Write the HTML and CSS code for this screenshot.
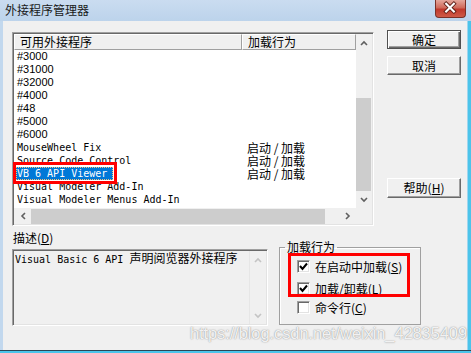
FILE: index.html
```html
<!DOCTYPE html>
<html lang="zh-CN">
<head>
    <meta charset="UTF-8">
    <title>外接程序管理器</title>
    <link rel="stylesheet" href="styles.css">
</head>
<body>

    <div class="window">
        <div class="titlebar">
            <span class="title">外接程序管理器</span>
            <div class="close">
                <svg width="31" height="18" viewBox="0 0 31 18">
                    <path d="M11.5 4.5 L19.5 12.5 M19.5 4.5 L11.5 12.5" stroke="#5a1c14" stroke-width="4" stroke-linecap="square"/>
                    <path d="M11.5 4.5 L19.5 12.5 M19.5 4.5 L11.5 12.5" stroke="#ffffff" stroke-width="2.2" stroke-linecap="square"/>
                </svg>
            </div>
        </div>

        <div class="frame">
            <div class="frame--left"></div>
            <div class="client">
                <div class="top">
                    <div class="listbox">
                        <div class="list--main">
                            <div class="list--header">
                                <div class="hcell hcell-1">可用外接程序</div>
                                <div class="hcell hcell-2">加载行为</div>
                            </div>
                            <div class="row num"><span class="c1">#3000</span></div>
                            <div class="row num"><span class="c1">#31000</span></div>
                            <div class="row num"><span class="c1">#32000</span></div>
                            <div class="row num"><span class="c1">#4000</span></div>
                            <div class="row num"><span class="c1">#48</span></div>
                            <div class="row num"><span class="c1">#5000</span></div>
                            <div class="row num"><span class="c1">#6000</span></div>
                            <div class="row"><span class="c1">MouseWheel Fix</span><span class="c2">启动 / 加载</span></div>
                            <div class="row"><span class="c1">Source Code Control</span><span class="c2">启动 / 加载</span></div>
                            <div class="row is-selected"><span class="c1"><span class="sel">VB 6 API Viewer</span></span><span class="c2">启动 / 加载</span></div>
                            <div class="row"><span class="c1">Visual Modeler Add-In</span></div>
                            <div class="row"><span class="c1">Visual Modeler Menus Add-In</span></div>
                            <div class="redbox redbox-list"></div>
                        </div>
                        <div class="vscroll">
                            <div class="sbtn">
                                <svg width="8" height="6" viewBox="0 0 8 6"><polyline points="1,5 4,2 7,5" fill="none" stroke="#606060" stroke-width="1.6"/></svg>
                            </div>
                            <div class="vtrack-top"></div>
                            <div class="vthumb"></div>
                            <div class="sbtn">
                                <svg width="8" height="6" viewBox="0 0 8 6"><polyline points="1,1 4,4 7,1" fill="none" stroke="#606060" stroke-width="1.6"/></svg>
                            </div>
                        </div>
                        <div class="hscroll">
                            <div class="sbtn">
                                <svg width="6" height="8" viewBox="0 0 6 8"><polyline points="5,1 2,4 5,7" fill="none" stroke="#606060" stroke-width="1.6"/></svg>
                            </div>
                            <div class="hthumb"></div>
                            <div class="htrack"></div>
                            <div class="sbtn">
                                <svg width="6" height="8" viewBox="0 0 6 8"><polyline points="1,1 4,4 1,7" fill="none" stroke="#606060" stroke-width="1.6"/></svg>
                            </div>
                        </div>
                        <div class="corner"></div>
                    </div>

                    <div class="buttons">
                        <button class="btn btn-default">确定</button>
                        <button class="btn btn-cancel">取消</button>
                        <button class="btn btn-help">帮助(<u>H</u>)</button>
                    </div>
                </div>

                <div class="bottom">
                    <div class="desc">
                        <div class="desc--label">描述(<u>D</u>)</div>
                        <div class="desc--box">
                            <div class="desc--text"><span class="mono">Visual Basic 6 API </span>声明阅览器外接程序</div>
                            <div class="dscroll">
                                <div class="sbtn">
                                    <svg width="8" height="6" viewBox="0 0 8 6"><polyline points="1,5 4,2 7,5" fill="none" stroke="#c4c4c4" stroke-width="1.6"/></svg>
                                </div>
                                <div class="sbtn">
                                    <svg width="8" height="6" viewBox="0 0 8 6"><polyline points="1,1 4,4 7,1" fill="none" stroke="#c4c4c4" stroke-width="1.6"/></svg>
                                </div>
                            </div>
                        </div>
                    </div>

                    <fieldset class="group">
                        <legend>加载行为</legend>
                        <div class="check check-1">
                            <span class="box">
                                <svg width="11" height="11" viewBox="0 0 11 11"><polyline points="2,5 4.5,8 9,2.5" fill="none" stroke="#000" stroke-width="2"/></svg>
                            </span>
                            <span>在启动中加载(<u>S</u>)</span>
                        </div>
                        <div class="check check-2">
                            <span class="box">
                                <svg width="11" height="11" viewBox="0 0 11 11"><polyline points="2,5 4.5,8 9,2.5" fill="none" stroke="#000" stroke-width="2"/></svg>
                            </span>
                            <span>加载/卸载(<u>L</u>)</span>
                        </div>
                        <div class="check check-3">
                            <span class="box"></span>
                            <span>命令行(<u>C</u>)</span>
                        </div>
                    </fieldset>

                    <div class="redbox redbox-group"></div>
                </div>
            </div>
            <div class="frame--right"></div>
        </div>
        <div class="frame--bottom"></div>

        <div class="watermark">https://blog.csdn.net/weixin_42835409</div>
    </div>

</body>
</html>
```

FILE: styles.css
```css
html, body {
    height: 100%;
    overflow: hidden;
}
body {
    margin: 0;
    font-family: "Noto Sans CJK SC", "Liberation Sans", sans-serif;
    font-size: 12px;
    color: #000;
    background-color: #bfd5ec;
}

.window {
    position: relative;
    width: 471px;
    height: 353px;
    display: flex;
    flex-direction: column;
    overflow: hidden;
}

/* title bar */
.titlebar {
    position: relative;
    height: 21px;
    flex: none;
    display: flex;
    align-items: center;
    padding-left: 5px;
    background: linear-gradient(#cadcf0, #bcd3eb);
}
.title {
    line-height: 14px;
    margin-top: -1px;
    color: #1a1a1a;
}
.close {
    position: absolute;
    top: 0;
    right: 5px;
    width: 31px;
    height: 18px;
    box-sizing: border-box;
    border: 1px solid #7a3128;
    border-top: none;
    border-radius: 0 0 4px 4px;
    background: linear-gradient(#e5a79c, #d06a5b 45%, #c0392c 55%, #cf5a48);
    display: flex;
}
.close svg {
    margin: -1px 0 0 -1px;
}

/* frame */
.frame {
    display: flex;
    height: 329px;
    flex: none;
}
.frame--left {
    width: 3px;
    background-color: #c2d8ee;
}
.frame--right {
    width: 4px;
    background: linear-gradient(to right, #9fd6ef 1px, #4cc4ea 1px);
}
.frame--bottom {
    height: 2px;
    border-top: 1px solid #2a4656;
    background-color: #4cc4ea;
}

.client {
    width: 464px;
    box-sizing: border-box;
    padding-left: 9px;
    background-color: #f0f0f0;
}

/* list + buttons */
.top {
    display: flex;
}
.listbox {
    margin-top: 11px;
    width: 362px;
    height: 194px;
    box-sizing: border-box;
    border: 1px solid;
    border-color: #a0a0a0 #ffffff #ffffff #a0a0a0;
    box-shadow: inset 1px 1px #696969, inset -1px -1px #e3e3e3;
    padding: 1px;
    display: grid;
    grid-template-columns: 342px 16px;
    grid-template-rows: 174px 16px;
}
.list--main {
    position: relative;
    background-color: #ffffff;
}
.list--header {
    display: flex;
    height: 16px;
    background-color: #f0f0f0;
}
.hcell {
    box-sizing: border-box;
    height: 16px;
    line-height: 14px;
    border: 1px solid;
    border-color: #ffffff #a0a0a0 #a0a0a0 #ffffff;
    white-space: nowrap;
}
.hcell-1 {
    width: 228px;
    padding-left: 5px;
}
.hcell-2 {
    flex: 1;
    padding-left: 5px;
}

.row {
    display: flex;
    height: 13px;
    line-height: 13px;
    white-space: pre;
}
.row .c1 {
    width: 228px;
    box-sizing: border-box;
    padding-left: 3px;
    font-family: "DejaVu Sans Mono", monospace;
    font-size: 10px;
}
.row.num .c1 {
    font-family: "Liberation Sans", sans-serif;
    font-size: 11px;
}
.row .c2 {
    padding-left: 5px;
    font-size: 12px;
    line-height: 13px;
}
.row.is-selected .c1 {
    padding-left: 2px;
}
.sel {
    display: inline-block;
    height: 13px;
    box-sizing: border-box;
    padding: 0 5px 0 0;
    color: #ffffff;
    background-color: #0078d7;
    border: 1px dotted #f2c27d;
    line-height: 11px;
}

.redbox {
    position: absolute;
    box-sizing: border-box;
    border: 3px solid #ff0000;
}
.redbox-list {
    left: -1px;
    top: 128px;
    width: 104px;
    height: 22px;
}

/* scrollbars */
.sbtn {
    width: 16px;
    height: 17px;
    display: flex;
    align-items: center;
    justify-content: center;
    flex: none;
}
.vscroll {
    display: flex;
    flex-direction: column;
    background-color: #f0f0f0;
}
.vtrack-top {
    height: 47px;
}
.vthumb {
    height: 93px;
    width: 15px;
    background-color: #cdcdcd;
}
.hscroll {
    display: flex;
    background-color: #f0f0f0;
}
.hscroll .sbtn {
    width: 17px;
    height: 16px;
}
.hthumb {
    width: 294px;
    height: 15px;
    margin-top: 1px;
    background-color: #cdcdcd;
}
.htrack {
    width: 14px;
}
.corner {
    background-color: #f0f0f0;
}

.buttons {
    margin-left: 13px;
    display: flex;
    flex-direction: column;
}
.btn {
    width: 74px;
    height: 19px;
    padding: 0;
    box-sizing: border-box;
    font-family: inherit;
    font-size: 12px;
    line-height: 14px;
    color: #000;
    background-color: #f0f0f0;
    border: 1px solid;
    border-color: #ffffff #696969 #696969 #ffffff;
    box-shadow: inset -1px -1px #a0a0a0;
}
.btn-default {
    margin-top: 9px;
    border-color: #505050;
    box-shadow: inset 1px 1px #ffffff, inset -1px -1px #696969, inset -2px -2px #a0a0a0;
}
.btn-cancel {
    margin-top: 7px;
}
.btn-help {
    margin-top: 103px;
    height: 20px;
}

/* description + group */
.bottom {
    position: relative;
    display: flex;
    align-items: flex-start;
}
.desc {
    width: 256px;
}
.desc--label {
    margin-top: 4px;
    padding-left: 1px;
    line-height: 16px;
    height: 16px;
}
.desc--box {
    margin-top: 3px;
    height: 77px;
    box-sizing: border-box;
    border: 1px solid;
    border-color: #a0a0a0 #ffffff #ffffff #a0a0a0;
    box-shadow: inset 1px 1px #696969, inset -1px -1px #e3e3e3;
    padding: 1px;
    display: flex;
    background-color: #f0f0f0;
}
.desc--text {
    flex: 1;
    line-height: 14px;
    padding-left: 1px;
    white-space: pre;
}
.mono {
    font-family: "DejaVu Sans Mono", monospace;
    font-size: 10px;
}
.dscroll {
    width: 16px;
    display: flex;
    flex-direction: column;
    justify-content: space-between;
    border-left: 1px solid #e6e6e6;
}

.group {
    margin: 14px 0 0 11px;
    padding: 0 0 9px 0;
    width: 142px;
    box-sizing: border-box;
    min-inline-size: 0;
    border: 1px solid #a0a0a0;
    box-shadow: inset 1px 1px #ffffff;
}
.group legend {
    margin-left: 5px;
    padding: 0 2px;
    line-height: 14px;
}
.check {
    display: flex;
    align-items: center;
    height: 16px;
    padding-left: 17px;
    white-space: nowrap;
}
.check-1 { margin-top: 4px; }
.check-2 { margin-top: 6px; }
.check-3 { margin-top: 3px; }
.box {
    width: 13px;
    height: 13px;
    box-sizing: border-box;
    margin-right: 5px;
    border: 1px solid;
    border-color: #a0a0a0 #ffffff #ffffff #a0a0a0;
    box-shadow: inset 1px 1px #696969, inset -1px -1px #e3e3e3;
    background-color: #ffffff;
    display: flex;
    align-items: center;
    justify-content: center;
}
.redbox-group {
    left: 276px;
    top: 27px;
    width: 122px;
    height: 44px;
}

.watermark {
    position: absolute;
    left: 190px;
    top: 323px;
    line-height: 20px;
    font-family: "Liberation Sans", sans-serif;
    font-size: 16.5px;
    letter-spacing: -0.1px;
    color: rgba(255, 255, 255, .9);
    text-shadow: 0 0 1px rgba(80, 80, 80, .6), 0 0 2px rgba(140, 140, 140, .4);
    pointer-events: none;
}
```
